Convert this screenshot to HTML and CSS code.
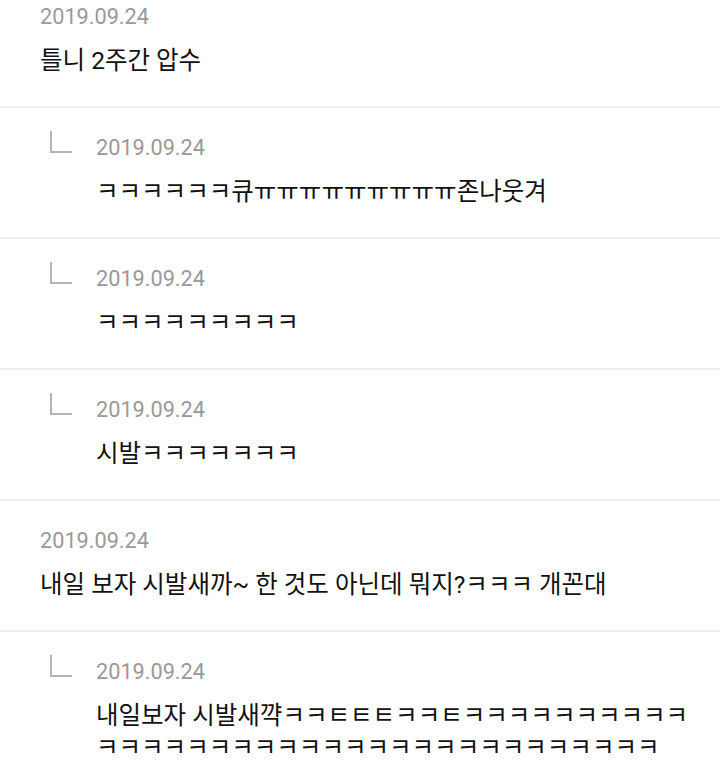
FILE: index.html
```html
<!DOCTYPE html>
<html lang="ko">
<head>
<meta charset="utf-8">
<title>댓글</title>
<link rel="stylesheet" href="styles.css">
</head>
<body>
<ul class="comments">
  <li class="comment comment--cut">
    <div class="comment__body">
      <div class="comment__date">2019.09.24</div>
      <p class="comment__text">틀니 2주간 압수</p>
    </div>
  </li>
  <li class="comment comment--reply">
    <svg class="reply-icon" viewBox="0 0 22 22" aria-hidden="true"><path d="M1 0 V21 H22"/></svg>
    <div class="comment__body">
      <div class="comment__date">2019.09.24</div>
      <p class="comment__text">ㅋㅋㅋㅋㅋㅋ큐ㅠㅠㅠㅠㅠㅠㅠㅠㅠ존나웃겨</p>
    </div>
  </li>
  <li class="comment comment--reply">
    <svg class="reply-icon" viewBox="0 0 22 22" aria-hidden="true"><path d="M1 0 V21 H22"/></svg>
    <div class="comment__body">
      <div class="comment__date">2019.09.24</div>
      <p class="comment__text">ㅋㅋㅋㅋㅋㅋㅋㅋㅋ</p>
    </div>
  </li>
  <li class="comment comment--reply">
    <svg class="reply-icon" viewBox="0 0 22 22" aria-hidden="true"><path d="M1 0 V21 H22"/></svg>
    <div class="comment__body">
      <div class="comment__date">2019.09.24</div>
      <p class="comment__text">시발ㅋㅋㅋㅋㅋㅋㅋ</p>
    </div>
  </li>
  <li class="comment">
    <div class="comment__body">
      <div class="comment__date">2019.09.24</div>
      <p class="comment__text">내일 보자 시발새까~ 한 것도 아닌데 뭐지?ㅋㅋㅋ 개꼰대</p>
    </div>
  </li>
  <li class="comment comment--reply">
    <svg class="reply-icon" viewBox="0 0 22 22" aria-hidden="true"><path d="M1 0 V21 H22"/></svg>
    <div class="comment__body">
      <div class="comment__date">2019.09.24</div>
      <p class="comment__text">내일보자 시발새꺅ㅋㅋㅌㅌㅌㅋㅋㅌㅋㅋㅋㅋㅋㅋㅋㅋㅋㅋㅋㅋㅋㅋㅋㅋㅋㅋㅋㅋㅋㅋㅋㅋㅋㅋㅋㅋㅋㅋㅋㅋㅋㅋㅋ</p>
    </div>
  </li>
</ul>
</body>
</html>
```

FILE: styles.css
```css
html, body {
  margin: 0;
  padding: 0;
  background: #ffffff;
}

body {
  font-family: Roboto, "Noto Sans CJK KR", sans-serif;
  color: #111111;
  overflow: hidden;
}

.comments {
  list-style: none;
  margin: 0;
  padding: 0;
}

.comment {
  padding: 25px 24px 29px 40px;
  border-bottom: 2px solid #eeeeee;
}

.comment--cut {
  padding-top: 2px;
}

.comment--reply {
  display: flex;
  align-items: flex-start;
  padding-left: 50px;
}

.reply-icon {
  flex: none;
  width: 22px;
  height: 22px;
  margin: -2px 24px 0 0;
  fill: none;
  stroke: #b4b4b4;
  stroke-width: 2;
}

.comment__body {
  flex: 1;
  min-width: 0;
}

.comment__date {
  font-size: 21.7px;
  line-height: 30px;
  color: #999999;
}

.comment__text {
  margin: 13px 0 0;
  font-size: 24.5px;
  line-height: 32px;
  color: #111111;
}
```
